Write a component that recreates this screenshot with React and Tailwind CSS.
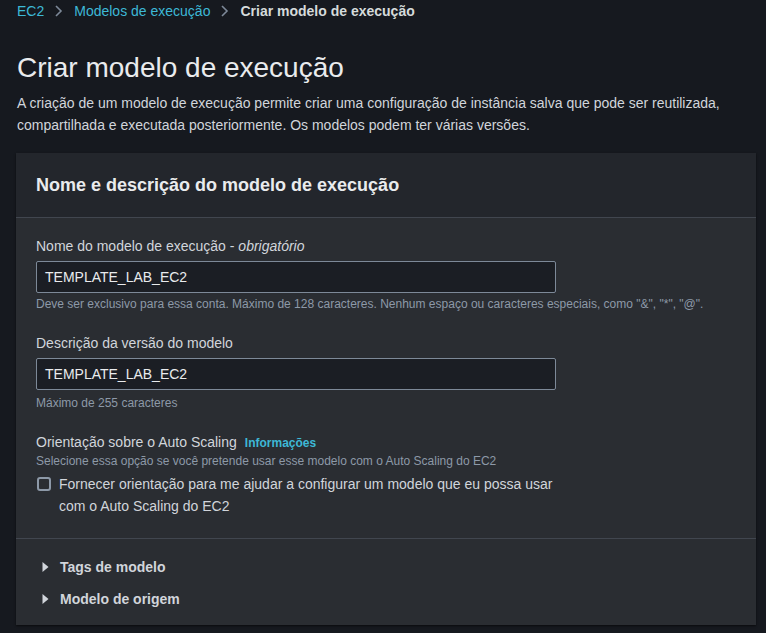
export default function App() {
  const font = { fontFamily: '"Liberation Sans", Arial, sans-serif' };
  return (
    <div className="min-h-[633px] w-[766px] bg-[#16191f] text-[#d1d5db] overflow-hidden" style={font}>
      <div className="px-[17px] pt-[1px]">
        <nav className="flex items-center h-[20px] text-[14px] gap-[8px]">
          <span className="text-[#3db8d6]">EC2</span>
          <svg width="12" height="14" viewBox="0 0 12 14" className="mx-[1px]"><path d="M3 2l5 5-5 5" fill="none" stroke="#7d8998" strokeWidth="1.6" /></svg>
          <span className="text-[#3db8d6]">Modelos de execução</span>
          <svg width="12" height="14" viewBox="0 0 12 14" className="mx-[1px]"><path d="M3 2l5 5-5 5" fill="none" stroke="#7d8998" strokeWidth="1.6" /></svg>
          <span className="font-bold text-[#d5dbdb]">Criar modelo de execução</span>
        </nav>
        <h1 className="mt-[30px] text-[28px] leading-[34px] text-[#e9ebed]">Criar modelo de execução</h1>
        <p className="mt-[7px] text-[14px] leading-[22px] text-[#d1d5db]">
          A criação de um modelo de execução permite criar uma configuração de instância salva que pode ser reutilizada, compartilhada e executada posteriormente. Os modelos podem ter várias versões.
        </p>
      </div>
      <div className="mt-[17px] ml-[16px] w-[740px] bg-[#2a2d32] shadow-[0_1px_2px_rgba(0,0,0,0.6)]">
        <div className="bg-[#23262c] px-[20px] h-[65px] flex items-center border-b border-[#41464f]">
          <h2 className="text-[18px] font-bold text-[#e9ebed]">Nome e descrição do modelo de execução</h2>
        </div>
        <div className="px-[20px] pt-[17px] pb-[21px]">
          <label className="block text-[14px] leading-[22px] text-[#d1d5db]">Nome do modelo de execução - <i>obrigatório</i></label>
          <div className="mt-[4px] w-[520px] h-[32px] rounded-[2px] border border-[#7d8998] bg-[#1b1e24] flex items-center px-[8px] text-[14px] text-[#e9ebed]">TEMPLATE_LAB_EC2</div>
          <p className="mt-[3px] text-[12px] leading-[16px] text-[#8d99a8]">Deve ser exclusivo para essa conta. Máximo de 128 caracteres. Nenhum espaço ou caracteres especiais, como "&amp;", "*", "@".</p>
          <label className="block mt-[20px] text-[14px] leading-[22px] text-[#d1d5db]">Descrição da versão do modelo</label>
          <div className="mt-[4px] w-[520px] h-[32px] rounded-[2px] border border-[#7d8998] bg-[#1b1e24] flex items-center px-[8px] text-[14px] text-[#e9ebed]">TEMPLATE_LAB_EC2</div>
          <p className="mt-[5px] text-[12px] leading-[16px] text-[#8d99a8]">Máximo de 255 caracteres</p>
          <div className="mt-[20px] flex items-baseline gap-[8px]">
            <span className="text-[14px] leading-[22px] text-[#d1d5db]">Orientação sobre o Auto Scaling</span>
            <span className="text-[12px] font-bold text-[#3db8d6]">Informações</span>
          </div>
          <p className="text-[12px] leading-[16px] text-[#8d99a8]">Selecione essa opção se você pretende usar esse modelo com o Auto Scaling do EC2</p>
          <div className="mt-[4px] flex items-start gap-[8px]">
            <div className="mt-[4px] ml-[1px] w-[14px] h-[14px] rounded-[3px] border-2 border-[#8d99a8] shrink-0"></div>
            <p className="text-[14px] leading-[22px] text-[#d1d5db] w-[510px]">Fornecer orientação para me ajudar a configurar um modelo que eu possa usar com o Auto Scaling do EC2</p>
          </div>
        </div>
        <div className="border-t border-[#41464f] px-[20px] pt-[17px] pb-[15px]">
          <div className="flex items-center h-[22px] gap-[8px] text-[14px] font-bold text-[#d1d5db]">
            <svg width="14" height="14" viewBox="0 0 14 14" className="ml-[3px]"><path d="M3.5 2l6 5-6 5z" fill="#d1d5db" /></svg>
            <span className="-ml-[1px]">Tags de modelo</span>
          </div>
          <div className="mt-[10px] flex items-center h-[22px] gap-[8px] text-[14px] font-bold text-[#d1d5db]">
            <svg width="14" height="14" viewBox="0 0 14 14" className="ml-[3px]"><path d="M3.5 2l6 5-6 5z" fill="#d1d5db" /></svg>
            <span className="-ml-[1px]">Modelo de origem</span>
          </div>
        </div>
      </div>
    </div>
  );
}
